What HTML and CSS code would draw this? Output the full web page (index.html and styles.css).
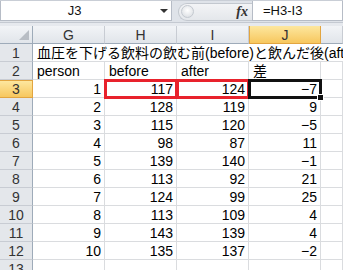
FILE: index.html
```html
<!DOCTYPE html>
<html lang="ja">
<head>
<meta charset="utf-8">
<link rel="stylesheet" href="styles.css">
</head>
<body>
<div class="fbar">
  <div class="namebox"><span class="nb-text">J3</span><span class="nb-arrow"></span></div>
  <div class="fx-area"><div class="pill"><span class="grip"></span><span class="fx">fx</span></div></div>
  <div class="formula">=H3-I3</div>
</div>
<div class="sep"></div>
<div class="sheet">
  <div class="hd corner"><span class="tri"></span></div>
  <div class="hd col">G</div>
  <div class="hd col">H</div>
  <div class="hd col">I</div>
  <div class="hd col sel">J</div>
  <div class="hd col last"></div>

  <div class="hd row">1</div>
  <div class="c title">血圧を下げる飲料の飲む前(before)と飲んだ後(after)</div>

  <div class="hd row">2</div>
  <div class="c t">person</div><div class="c t">before</div><div class="c t">after</div><div class="c t">差</div><div class="c"></div>

  <div class="hd row sel">3</div>
  <div class="c n">1</div><div class="c n red">117</div><div class="c n red">124</div><div class="c n active">−7<span class="handle"></span></div><div class="c"></div>

  <div class="hd row">4</div>
  <div class="c n">2</div><div class="c n">128</div><div class="c n">119</div><div class="c n">9</div><div class="c"></div>

  <div class="hd row">5</div>
  <div class="c n">3</div><div class="c n">115</div><div class="c n">120</div><div class="c n">−5</div><div class="c"></div>

  <div class="hd row">6</div>
  <div class="c n">4</div><div class="c n">98</div><div class="c n">87</div><div class="c n">11</div><div class="c"></div>

  <div class="hd row">7</div>
  <div class="c n">5</div><div class="c n">139</div><div class="c n">140</div><div class="c n">−1</div><div class="c"></div>

  <div class="hd row">8</div>
  <div class="c n">6</div><div class="c n">113</div><div class="c n">92</div><div class="c n">21</div><div class="c"></div>

  <div class="hd row">9</div>
  <div class="c n">7</div><div class="c n">124</div><div class="c n">99</div><div class="c n">25</div><div class="c"></div>

  <div class="hd row">10</div>
  <div class="c n">8</div><div class="c n">113</div><div class="c n">109</div><div class="c n">4</div><div class="c"></div>

  <div class="hd row">11</div>
  <div class="c n">9</div><div class="c n">143</div><div class="c n">139</div><div class="c n">4</div><div class="c"></div>

  <div class="hd row">12</div>
  <div class="c n">10</div><div class="c n">135</div><div class="c n">137</div><div class="c n">−2</div><div class="c"></div>

  <div class="hd row">13</div>
  <div class="c"></div><div class="c"></div><div class="c"></div><div class="c"></div><div class="c"></div>
</div>
</body>
</html>
```

FILE: styles.css
```css
* { box-sizing: border-box; }
html, body { margin: 0; padding: 0; }
body {
  width: 343px;
  height: 270px;
  overflow: hidden;
  background: #ffffff;
  font-family: "Liberation Sans", "Noto Sans CJK JP", sans-serif;
  color: #000;
}

.fbar {
  display: flex;
  height: 22px;
  background: #dfe3e9;
  border-top: 1px solid #c9ced6;
}
.namebox {
  width: 172px;
  height: 20px;
  background: #fff;
  border: 1px solid #b6bcc6;
  border-top: none;
  display: flex;
  align-items: center;
  position: relative;
}
.nb-text {
  flex: 1;
  text-align: center;
  font-size: 13px;
  padding-right: 12px;
  color: #111;
}
.nb-arrow {
  width: 0;
  height: 0;
  border-left: 4px solid transparent;
  border-right: 4px solid transparent;
  border-top: 4px solid #333;
  margin-right: 3px;
}
.fx-area {
  width: 80px;
  display: flex;
  align-items: center;
  padding-left: 6px;
}
.pill {
  flex: 1;
  height: 18px;
  border-radius: 9px 0 0 9px;
  background: linear-gradient(#f3f4f6, #e4e7eb);
  border: 1px solid #c3c8cf;
  border-right: none;
  display: flex;
  align-items: center;
  justify-content: space-between;
  padding: 0 4px 0 2px;
}
.grip {
  width: 13px;
  height: 13px;
  border-radius: 50%;
  background: radial-gradient(circle at 50% 40%, #ffffff, #d5d9de);
  border: 1px solid #c4c9d0;
}
.fx {
  font-family: "Liberation Serif", serif;
  font-style: italic;
  font-weight: bold;
  font-size: 14px;
  color: #333;
}
.formula {
  flex: 1;
  height: 20px;
  background: #fff;
  border: 1px solid #b6bcc6;
  border-top: none;
  font-size: 13px;
  line-height: 19px;
  padding-left: 10px;
  color: #111;
}
.sep {
  height: 4px;
  background: #e6e9ee;
  border-top: 1px solid #c4c9d1;
}

.sheet {
  display: grid;
  grid-template-columns: 33px 72px 72px 72px 72px 22px;
  grid-auto-rows: 18px;
  font-size: 14px;
}
.hd {
  background: linear-gradient(#f2f4f7, #e1e5ea);
  border-right: 1px solid #c8ccd3;
  border-bottom: 1px solid #c8ccd3;
  color: #333;
  text-align: center;
  line-height: 18px;
  font-size: 14px;
}
.hd.col { border-bottom-color: #9eabb9; }
.hd.row { background: #e4e7eb; border-right-color: #9eabb9; }
.hd.sel {
  background: linear-gradient(#fde79f, #f7c75e);
  border-right: 1px solid #e2a540;
  border-bottom: 1px solid #e2a540;
  border-left: 1px solid #e2a540;
}
.hd.row.sel { border-left: none; border-top: 1px solid #e2a540; line-height: 16px; }
.corner { position: relative; border-bottom-color: #9eabb9; border-right-color: #9eabb9; }
.tri {
  position: absolute;
  right: 3px;
  bottom: 3px;
  width: 0;
  height: 0;
  border-left: 10px solid transparent;
  border-bottom: 10px solid #b8bdc4;
}

.c {
  border-right: 1px solid #dadcdf;
  border-bottom: 1px solid #dadcdf;
  line-height: 18px;
  white-space: nowrap;
  overflow: hidden;
}
.title {
  grid-column: span 5;
  padding-left: 4px;
  border-right: none;
}
.t { padding-left: 4px; }
.n { text-align: right; padding-right: 3px; }
.red {
  position: relative;
  z-index: 1;
  outline: 3px solid #e8222c;
  outline-offset: -2px;
  overflow: visible;
}
.active {
  position: relative;
  z-index: 2;
  outline: 3px solid #111;
  outline-offset: -2px;
  overflow: visible;
}
.handle {
  position: absolute;
  right: -4px;
  bottom: -4px;
  width: 7px;
  height: 7px;
  background: #111;
  border: 1px solid #fff;
}
```
